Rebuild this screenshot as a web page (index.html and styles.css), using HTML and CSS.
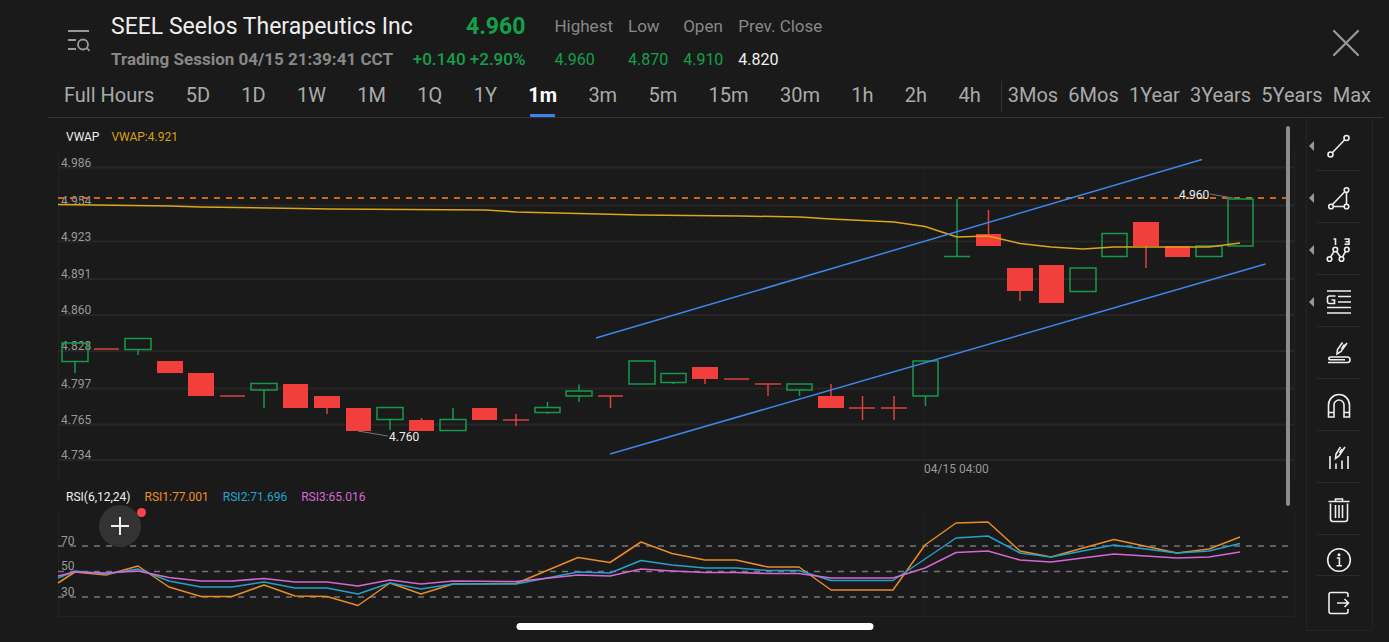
FILE: index.html
```html
<!DOCTYPE html>
<html lang="en">
<head>
<meta charset="utf-8">
<title>SEEL Seelos Therapeutics Inc</title>
<link rel="stylesheet" href="styles.css">
</head>
<body>
<header class="header">
  <button class="icon-btn" aria-label="Search list">
    <svg width="24" height="30" viewBox="0 0 24 30" fill="none" stroke="#999" stroke-width="1.8"><path d="M1 3h21M1 12h8M1 21h8M20 20l2.500 3"/><circle cx="16" cy="16.500" r="5"/></svg>
  </button>
  <div class="names">
    <h1 class="title">SEEL Seelos Therapeutics Inc</h1>
    <p class="session">Trading Session 04/15 21:39:41 CCT</p>
  </div>
  <div class="quote">
    <strong class="price">4.960</strong>
    <span class="change">+0.140 +2.90%</span>
  </div>
  <dl class="stats">
    <div><dt>Highest</dt><dd>4.960</dd></div>
    <div><dt>Low</dt><dd>4.870</dd></div>
    <div><dt>Open</dt><dd>4.910</dd></div>
    <div><dt>Prev. Close</dt><dd class="flat">4.820</dd></div>
  </dl>
  <button class="icon-btn close" aria-label="Close">
    <svg width="30" height="30" viewBox="0 0 30 30" fill="none" stroke="#999" stroke-width="2.200" stroke-linecap="round"><path d="M3 3l24 24M27 3L3 27"/></svg>
  </button>
</header>
<nav class="tabs">
  <div class="group intervals">
    <button class="tab">Full Hours</button><button class="tab">5D</button><button class="tab">1D</button><button class="tab">1W</button><button class="tab">1M</button><button class="tab">1Q</button><button class="tab">1Y</button><button class="tab active">1m</button><button class="tab">3m</button><button class="tab">5m</button><button class="tab">15m</button><button class="tab">30m</button><button class="tab">1h</button><button class="tab">2h</button><button class="tab">4h</button>
  </div>
  <div class="group ranges">
    <button class="tab">3Mos</button><button class="tab">6Mos</button><button class="tab">1Year</button><button class="tab">3Years</button><button class="tab">5Years</button><button class="tab">Max</button>
  </div>
</nav>
<main class="main">
  <div class="charts">
    <section class="panel">
      <div class="legend"><span class="name">VWAP</span><span class="vwap">VWAP:4.921</span></div>
      <svg class="plot" viewBox="48 148 1258 338">
        <path class="grid" d="M58 167.500H1295M58 205.500H1295M58 241.500H1295M58 279H1295M58 315H1295M58 351H1295M58 388.500H1295M58 424.500H1295M58 460H1295"/>
        <path class="grid faint" d="M58.500 148V480M924 168V480M1294.500 148V480"/>
        <g class="axis">
          <text x="61" y="167">4.986</text><text x="61" y="205">4.954</text><text x="61" y="241">4.923</text><text x="61" y="278">4.891</text><text x="61" y="314">4.860</text><text x="61" y="350">4.828</text><text x="61" y="388">4.797</text><text x="61" y="424">4.765</text><text x="61" y="459">4.734</text>
          <text x="924" y="473">04/15 04:00</text>
        </g>
        <path class="last" d="M58 198H1289"/>
        <path class="down" d="M157 361h26v12h-26zM188 373h26v23h-26zM283 384h25v24h-25zM314 396h26v12h-26zM346 408h25v23h-25zM409 420h25v11h-25zM472 408h25v12h-25zM692 367h26v12h-26zM818 396h26v12h-26zM976 234h25v12h-25zM1007 268h26v23h-26zM1039 265h25v38h-25zM1133 222h26v24h-26zM1165 246h25v11h-25z"/>
        <path class="wick down-line" d="M94 349h25M220 396h25M327 408v6M421.500 420v-2M503 420h26M516 414v12M598 396h25M610.500 396v12M705 379v5M724 379h25M755 384h26M768 384v12M831 396v-12M849 408h26M862.500 396v24M881 408h26M894 396v24M988.500 234v-24M1020 291v10M1146 246v22"/>
        <path class="wick up" d="M62 343h26v18.500h-26zM75 361.500V373M125 338.500h26v11h-26zM138 349.500V355M251 383.500h26v6.500h-26zM264 390V408M377 407.500h26v12h-26zM390 419.500V430M440 419.500h26v11h-26zM453 419.500V408M535 407.500h25v5h-25zM547.500 402V407M547.500 413V414M566 391h26v5h-26zM579 391V384.500M579 396V402M629 361h26v23h-26zM661 373.500h25v9h-25zM673.500 382V384M787 384h25v6h-25zM799.500 390V396M913 361h25v35h-25zM925.500 396V406M944 256.500h26M957 256V199M1070 268h26v23.500h-26zM1102 233.500h25v23h-25zM1196 246h26v10.500h-26zM1228 199h25v47h-25z"/>
        <path class="leader" d="M358 431L388 436M1210 194L1233 198"/>
        <g class="mark"><text x="389" y="441">4.760</text><text x="1179" y="199">4.960</text></g>
        <polyline class="line s-vwap" points="58,204.500 170,206 200,207 330,209 485,210 516,212 640,215 740,216 800,217 831,219 894,222 925,226.500 957,237 988,236 1020,243.500 1051,247 1083,249 1114,247 1209,247 1240,243"/>
        <path class="line trend" d="M596 338L1202 159.500M610 454L1265.500 264"/>
      </svg>
    </section>
    <section class="panel">
      <div class="legend compact"><span class="name">RSI(6,12,24)</span><span class="rsi1">RSI1:77.001</span><span class="rsi2">RSI2:71.696</span><span class="rsi3">RSI3:65.016</span></div>
      <button class="add" aria-label="Add indicator"><svg width="20" height="20" viewBox="0 0 20 20" stroke="#eee" stroke-width="2"><path d="M1 10h18M10 1v18"/></svg></button>
      <svg class="plot" viewBox="48 508 1258 112">
        <path class="grid faint" d="M58.500 512V616.500H1294.500V512M924 512V616"/>
        <path class="levels" d="M58 546H1289M58 571.500H1289M58 597H1289"/>
        <g class="axis"><text x="61" y="545">70</text><text x="61" y="570">50</text><text x="61" y="596">30</text></g>
        <polyline class="line s1" points="58,583 75,572 106,575 138,566 169,587 201,596.500 232,596.500 264,585 295,596 327,596.500 358,605.500 390,583 421,594 453,584 516,583.500 578,557.500 610,562.500 641,542 672,553.500 705,560 736,560 768,567 799,567 831,590 893,590 925,545 956,523 988,522 1020,551 1051,557 1083,548 1114,539.500 1177,553 1209,549 1240,537"/>
        <polyline class="line s2" points="58,578 75,571 106,574 138,569 169,581 201,587 232,587 264,582 295,588 327,588 358,594 390,583 421,589 453,584 516,584 578,572 610,573 641,560.500 672,565 705,568 736,568 768,570.500 799,570.500 831,580.500 893,580.500 925,559 956,538 988,536 1020,553 1051,557 1114,545 1177,553 1209,551 1240,543.500"/>
        <polyline class="line s3" points="58,576 75,572 106,573 138,571 169,577.500 201,581 232,581 264,578.500 295,582 327,582 358,586 390,580 421,584 453,581 516,581.500 578,575 610,576 641,569 672,571 705,572.500 736,572.500 768,573.500 799,573.500 831,578 893,578 925,568 956,552.500 988,551 1020,560 1051,562 1114,554 1177,558 1209,557 1240,552"/>
      </svg>
    </section>
    <div class="scrollbar"></div>
  </div>
  <aside class="tools">
    <button class="tool more" aria-label="Line"><svg viewBox="0 0 26 26"><path d="M6.500 19.500L18.500 7"/><circle cx="4.500" cy="21.500" r="2.500"/><circle cx="20.500" cy="5" r="2.500"/></svg></button>
    <button class="tool more" aria-label="Shape"><svg viewBox="0 0 26 26"><path d="M6.500 19.500L18.500 7M20.500 7.500V19M7.500 21.500H18"/><circle cx="5" cy="21.500" r="2.300"/><circle cx="20.500" cy="21.500" r="2.300"/><circle cx="20.500" cy="5" r="2.300"/></svg></button>
    <button class="tool more" aria-label="Waves"><svg viewBox="0 0 26 26"><path d="M4.500 20L8 14.500M10.500 14.500L14.500 20M16.500 20L19.500 14.500M7.500 2H9.500V8M18.500 2H23V7.300H18.500M19.500 4.700H23"/><circle cx="3.500" cy="22" r="2.300"/><circle cx="9.300" cy="12.500" r="2.300"/><circle cx="15.500" cy="22" r="2.300"/><circle cx="20.800" cy="12.500" r="2.300"/></svg></button>
    <button class="tool more" aria-label="Gann and Fibonacci"><svg viewBox="0 0 26 26"><path d="M1 2H25M12 7.500H25M12 13H25M1 18.500H25M1 24H25M9.500 7H3.500Q1.500 7 1.500 9V12.500Q1.500 14.500 3.500 14.500H8.500V11H5.500"/></svg></button>
    <button class="tool" aria-label="Brush"><svg viewBox="0 0 26 26"><path d="M16.500 1.500L11.500 8.500L11 13L15 10.500L21 2M18.500 3.500L15.500 8M12 16H21.500Q24 16 24 18.800Q24 21.500 21.500 21.500H2M13 16H5Q2.800 16 2.800 17.500Q2.800 18.800 5 18.800H19"/></svg></button>
    <button class="tool" aria-label="Magnet"><svg viewBox="0 0 26 26"><path d="M2.500 24V12A10.500 10.500 0 0 1 23.500 12V24H18V12A5 5 0 0 0 8 12V24ZM2.500 19.500H8M18 19.500H23.500"/></svg></button>
    <button class="tool" aria-label="Draw on bars"><svg viewBox="0 0 26 26"><path d="M4 11V24M10 18.500V24M16 15.500V24M22 11V24M14.500 2L10 9L9.500 13.500L13 11L19 2M16 4L13.500 8"/></svg></button>
    <button class="tool" aria-label="Delete"><svg viewBox="0 0 26 26"><path d="M2.500 4.500H23.500M9.500 4.500V2H16.500V4.500M4.500 6.500V22Q4.500 24.500 7 24.500H19Q21.500 24.500 21.500 22V6.500M9.500 8V21M13 8V21M16.500 8V21"/></svg></button>
    <button class="tool info" aria-label="Information"><svg viewBox="0 0 26 26"><circle cx="13" cy="13" r="11.300"/><path d="M10.800 11H13.400V18.500M10.500 18.700H16"/><circle class="dot" cx="13" cy="7.700" r="1.500"/></svg></button>
    <button class="tool exit" aria-label="Exit"><svg viewBox="0 0 26 26"><path d="M22 7V4.500Q22 2.500 20 2.500H5Q3 2.500 3 4.500V21.500Q3 23.500 5 23.500H20Q22 23.500 22 21.500V19M11 13H22.500M18.500 9L22.500 13L18.500 17"/></svg></button>
  </aside>
</main>
<div class="home-indicator"></div>
</body>
</html>
```
FILE: styles.css
```css
* { box-sizing: border-box; }
body {
  margin: 0;
  min-height: 100vh;
  position: relative;
  background: #1a1a1a;
  color: #999;
  font-family: Roboto, "Liberation Sans", sans-serif;
}
button {
  padding: 0;
  border: 0;
  background: none;
  color: inherit;
  font: inherit;
}
svg { display: block; }

.header {
  display: flex;
  align-items: center;
  padding: 10px 28px 0 67px;
}
.names { margin-left: 20px; }
.title {
  margin: 0;
  color: #eee;
  font-size: 23px;
  font-weight: 400;
  line-height: 33px;
}
.session {
  margin: 0;
  color: #888;
  font-size: 17px;
  font-weight: 700;
  line-height: 33px;
}
.quote {
  display: flex;
  flex-direction: column;
  align-items: flex-end;
  color: #14a04a;
  line-height: 33px;
}
.price { font-size: 23px; }
.change { font-size: 17px; font-weight: 500; }
.stats {
  display: flex;
  gap: 15px;
  margin: 0 0 0 29px;
  line-height: 33px;
}
.stats dt { color: #888; font-size: 17px; }
.stats dd { margin: 0; color: #14a04a; font-size: 16px; }
.stats .flat { color: #eee; }
.close { margin-left: auto; }

.tabs {
  display: flex;
  margin: 0 6px 0 48px;
  padding-left: 16px;
  border-bottom: 1px solid #333;
}
.group { display: flex; justify-content: space-between; }
.intervals { flex: 916; padding-right: 20px; }
.ranges {
  flex: 363;
  margin: 5px 0;
  padding: 0 12px 0 6px;
  border-left: 1px solid #333;
}
.tab {
  height: 41px;
  padding-bottom: 3px;
  color: #aaa;
  font-size: 20px;
}
.ranges .tab { height: 31px; }
.active {
  position: relative;
  color: #fff;
  font-weight: 700;
}
.active::after {
  content: "";
  position: absolute;
  left: 2px;
  right: 2px;
  bottom: 0;
  height: 3px;
  border-radius: 1px;
  background: #3d84f0;
}

.main { display: flex; padding: 0 16px 0 48px; }
.charts { flex: 1; min-width: 0; position: relative; }
.panel { position: relative; }
.legend {
  display: flex;
  gap: 12px;
  padding: 9px 18px 1px;
  font-size: 12px;
  line-height: 20px;
}
.compact { gap: 14px; padding-top: 1px; }
.name { color: #eee; }
.vwap { color: #d9a014; }
.rsi1 { color: #ee8e26; }
.rsi2 { color: #21a5d3; }
.rsi3 { color: #d667d4; }
.plot { width: 100%; height: auto; }
.grid { fill: none; stroke: #262626; stroke-width: 2; }
.faint { stroke: #222; stroke-width: 1; }
.axis { fill: #999; font-size: 12px; }
.mark { fill: #eee; font-size: 12px; }
.last { stroke: #cf661c; stroke-width: 2; stroke-dasharray: 6 6; }
.levels { stroke: #71757d; stroke-width: 1.5; stroke-dasharray: 6 6; }
.down { fill: #f23f3c; }
.wick { fill: none; stroke-width: 1.5; }
.down-line { stroke: #d9423c; }
.up { stroke: #16994a; }
.leader { stroke: #777; }
.line { fill: none; stroke-width: 1.5; stroke-linejoin: round; }
.trend { stroke: #3e87ea; }
.s-vwap { stroke: #dca51a; }
.s1 { stroke: #e98b28; }
.s2 { stroke: #24a0ca; }
.s3 { stroke: #d468d2; }
.add {
  position: absolute;
  left: 51px;
  top: 19px;
  display: grid;
  place-items: center;
  width: 42px;
  height: 42px;
  border-radius: 50%;
  background: #333;
}
.add::after {
  content: "";
  position: absolute;
  top: 3px;
  right: -5px;
  width: 9px;
  height: 9px;
  border-radius: 50%;
  background: #fb4449;
}
.scrollbar {
  position: absolute;
  top: 8px;
  right: 16px;
  width: 4px;
  height: 74%;
  border-radius: 2px;
  background: #8c8c8c;
}

.tools {
  display: flex;
  flex-direction: column;
  width: 67px;
  padding: 1px 12px 0 10px;
  border: 1px solid #242424;
  border-top: 0;
}
.tool {
  position: relative;
  display: grid;
  place-items: center;
  height: 52px;
  padding-top: 2px;
  border-bottom: 1px solid #2a2a2a;
}
.tool svg {
  width: 26px;
  height: 26px;
  fill: none;
  stroke: #eee;
  stroke-width: 1.6;
}
.tool .dot { fill: #eee; stroke: none; }
.more::before {
  content: "";
  position: absolute;
  left: -8px;
  top: 22px;
  border: 5px solid transparent;
  border-right-color: #999;
  border-left: 0;
}
.info { height: 41px; padding-top: 10px; }
.exit { height: 54px; padding-top: 0; border: 0; }
.home-indicator {
  position: absolute;
  left: 50%;
  bottom: 12px;
  width: 357px;
  height: 7px;
  border-radius: 4px;
  background: #fff;
  transform: translateX(-50%);
}
```
